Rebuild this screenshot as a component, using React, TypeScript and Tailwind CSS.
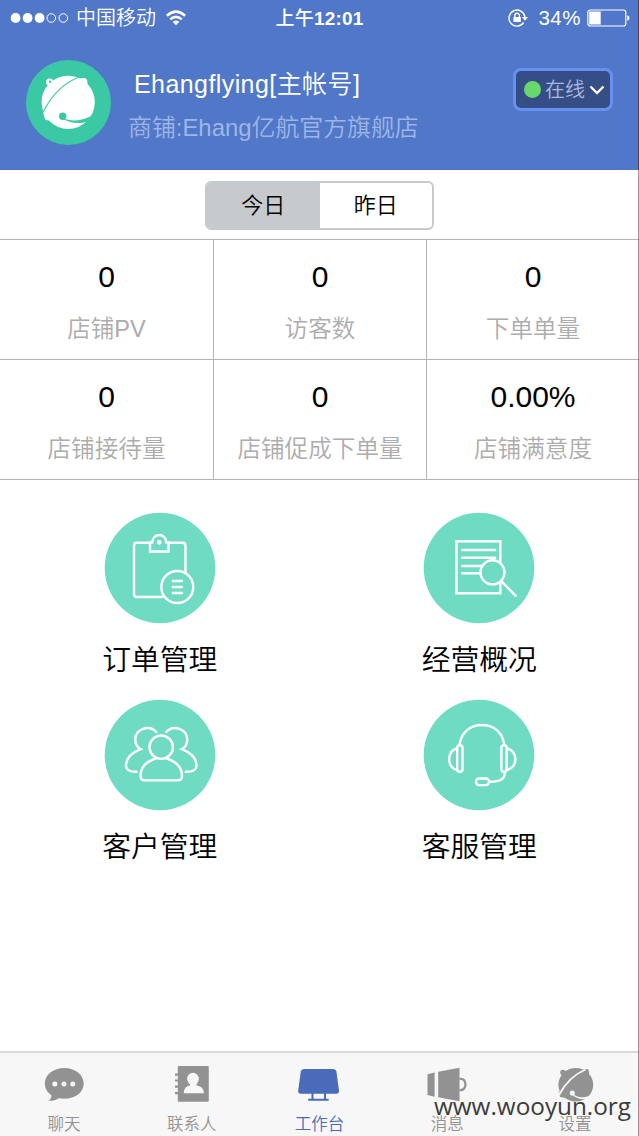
import type { ReactNode } from "react";

const stats = [
  { value: "0", label: "店铺PV" },
  { value: "0", label: "访客数" },
  { value: "0", label: "下单单量" },
  { value: "0", label: "店铺接待量" },
  { value: "0", label: "店铺促成下单量" },
  { value: "0.00%", label: "店铺满意度" },
];

const menu: { title: string; icon: ReactNode }[] = [
  { title: "订单管理", icon: <OrderIcon /> },
  { title: "经营概况", icon: <ReportIcon /> },
  { title: "客户管理", icon: <CustomersIcon /> },
  { title: "客服管理", icon: <HeadsetIcon /> },
];

const tabs: { name: string; icon: ReactNode; active?: boolean }[] = [
  { name: "聊天", icon: <ChatIcon /> },
  { name: "联系人", icon: <ContactsIcon /> },
  { name: "工作台", icon: <DeskIcon />, active: true },
  { name: "消息", icon: <MegaphoneIcon /> },
  { name: "设置", icon: <SettingsIcon /> },
];

function OrderIcon() {
  return (
    <>
      <path d="M45.5 30.8H33Q30 30.8 30 33.8V82Q30 85 33 85H58M65 30.8H78.5Q81.5 30.8 81.5 33.8V60" />
      <path d="M46 39.5V30.5H48.2C49 20.5 61.5 20.5 62.3 30.5H64.5V39.5Z" />
      <circle cx="55.2" cy="30.3" r="1.7" fill="white" strokeWidth="1.4" />
      <circle cx="73.3" cy="75" r="16" />
      <path d="M69 69H77.8M69 75H77.8M69 81H77.8" strokeWidth="2.6" />
    </>
  );
}

function ReportIcon() {
  return (
    <>
      <path d="M77.3 50V29.3H33.5V81.3H77.3V71" />
      <path d="M39.2 38H72.2M39.2 45.7H72.2M39.2 54H58.8M39.2 61.3H56.5" />
      <circle cx="69.5" cy="60.3" r="12" />
      <path d="M78.2 69L92.5 83.7" />
    </>
  );
}

function CustomersIcon() {
  return (
    <>
      <circle cx="57.2" cy="48.2" r="11.7" />
      <path d="M53 59.2C43 62 36.5 68 36.5 77Q36.5 81.4 41 81.4H73.5Q78 81.4 78 77C78 68 71 62 61.5 59.2" />
      <path d="M52.3 33C45 25 31.3 30 31.3 40.5C31.3 45 33.5 48.5 36.8 50.2C28 53.5 22 59 22 67Q22.3 73 32.7 72.8" />
      <path d="M62.3 33C69.5 25 83.2 30 83.2 40.5C83.2 45 81 48.5 77.7 50.2C86.5 53.5 92.5 59 92.5 67Q92.2 73 81.8 72.8" />
    </>
  );
}

function HeadsetIcon() {
  return (
    <>
      <path d="M36.5 46C38 33.5 47 26 59 26S79.8 33.5 81.3 46" />
      <rect x="34.2" y="46.2" width="5.3" height="26.6" rx="2.65" />
      <rect x="78.4" y="46.2" width="5.3" height="26.6" rx="2.65" />
      <path d="M34.2 49.5C23.5 51 23.5 69.5 34.2 70.8" />
      <path d="M83.8 49.5C95.2 51 95.2 69.5 83.8 70.8" />
      <path d="M81.8 73C81.8 80 78 82.8 66.5 82.8" />
      <rect x="53" y="79.5" width="13" height="6.6" rx="3" />
    </>
  );
}

function ChatIcon() {
  return (
    <>
      <path d="M24.3 6C13.3 6 4.8 13 4.8 21.5C4.8 26.5 7.5 30.6 11.5 33.2C11.3 35.8 10.5 37.2 8.8 38.8C12.5 38.9 15.8 38.3 18.8 36.3C33 38.5 43.7 31.5 43.7 21.5C43.7 13 35.3 6 24.3 6Z" />
      <g fill="#f7f7f7">
        <circle cx="14.8" cy="22" r="2.5" />
        <circle cx="24" cy="22" r="2.5" />
        <circle cx="32.8" cy="22" r="2.5" />
      </g>
    </>
  );
}

function ContactsIcon() {
  return (
    <>
      <rect x="9.8" y="4" width="31" height="35.7" rx="1" />
      <path d="M7 12.7H12M7 18.5H12M7 24.7H12M7 31.2H12" stroke="currentColor" strokeWidth="2.2" />
      <ellipse cx="25" cy="17" rx="5.8" ry="6.3" fill="#f7f7f7" />
      <path d="M22 21H28.5V23.5Q35.5 24 36 31.3H15.7Q16 24 22 23.5Z" fill="#f7f7f7" />
    </>
  );
}

function DeskIcon() {
  return (
    <>
      <path d="M9 7H38.2Q41 7 41.4 9.5L44 28.5Q44.3 31.7 41 31.7H6Q2.8 31.7 3.2 28.5L5.8 9.5Q6.2 7 9 7Z" />
      <path d="M17.5 31V38M30 31V38M13.2 37.8H33.7" fill="none" stroke="currentColor" strokeWidth="2" />
    </>
  );
}

function MegaphoneIcon() {
  return (
    <>
      <path d="M4.5 12.2L11.6 10.6V34.8L4.5 33Z" />
      <path d="M15.2 9.7L36.5 5.7V39.2L15.2 35.3Z" />
      <path d="M36.5 17C44.5 15 44.5 29.5 36.5 28" fill="none" stroke="currentColor" strokeWidth="2.3" />
    </>
  );
}

function SettingsIcon() {
  return (
    <>
      <ellipse cx="24.8" cy="22.8" rx="17.4" ry="16.7" />
      <circle cx="12" cy="10.5" r="2.8" />
      <path d="M32 7.5L37 7Q38.3 9 38 13Z" />
      <path d="M7.5 29L9 35L15 36Z" />
      <path d="M34.5 7.5C22 13 14 21.5 8 33" fill="none" stroke="#f7f7f7" strokeWidth="1.9" />
      <circle cx="21.3" cy="31" r="2.6" fill="#f7f7f7" />
      <path d="M21 31.5C26 35.5 32 36.5 39.5 33.5L36 37C30 37.8 25 36.5 20.5 32.5Z" fill="#f7f7f7" />
    </>
  );
}

function Avatar() {
  return (
    <svg viewBox="0 0 85 85" className="h-[85px] w-[85px] shrink-0">
      <circle cx="42.5" cy="42.5" r="42.5" fill="#3bc9a5" />
      <g fill="white">
        <circle cx="42.2" cy="42.3" r="26.6" />
        <circle cx="23.7" cy="22" r="3.6" />
        <path d="M53 18.5L58.5 18Q61.5 18.5 61.3 21.5L61.5 25.5Z" />
        <path d="M16.5 50L18.6 58Q19.2 60.5 21.5 60.3L25 60.5Z" />
      </g>
      <circle cx="24" cy="21.7" r="1.2" fill="#3bc9a5" />
      <path d="M52.5 17.3C37 23.5 25 36 17 52.5" fill="none" stroke="#3bc9a5" strokeWidth="1.1" />
      <circle cx="36.7" cy="56.2" r="3.7" fill="#3bc9a5" />
      <path d="M36.5 58C45 61.8 55 61.5 66 55.5L61 61.5C53 64.5 44 63 36.5 58.8Z" fill="#3bc9a5" />
    </svg>
  );
}

function StatusBar() {
  return (
    <div className="grid h-9 grid-cols-3 items-center text-[20px] leading-none text-white">
      <div className="flex items-center pl-[10px]">
        <svg viewBox="0 0 60 12" className="h-3 w-[60px]">
          <g fill="white">
            <circle cx="5.6" cy="6" r="4.9" />
            <circle cx="17.6" cy="6" r="4.9" />
            <circle cx="29.6" cy="6" r="4.9" />
          </g>
          <g fill="none" stroke="white">
            <circle cx="41.3" cy="6" r="4.3" />
            <circle cx="53.3" cy="6" r="4.3" />
          </g>
        </svg>
        <span className="ml-[6px] whitespace-nowrap font-[350]">中国移动</span>
        <svg viewBox="0 0 20 16" className="ml-[10px] h-4 w-5" fill="none" stroke="white" strokeWidth="2.6">
          <path d="M.9 5.8Q10-2.4 19.1 5.8" />
          <path d="M4.2 9.4Q10 4.2 15.8 9.4" />
          <path d="M6.6 11.8Q10 9 13.4 11.8L10 15.2Z" fill="white" stroke="none" />
        </svg>
      </div>
      <div className="text-center text-[19px] font-medium tracking-[0.2px]">
        上午<span className="font-bold">12:01</span>
      </div>
      <div className="flex items-center justify-end pr-[9px]">
        <svg viewBox="0 0 20 18" className="h-[18px] w-5" fill="none" stroke="white" strokeWidth="1.4">
          <path d="M15.7 13.5A8 8 0 1 1 17 8.5" />
          <path d="M14 8H20L17 11.8Z" fill="white" stroke="none" />
          <rect x="5.4" y="8" width="7.4" height="5" fill="white" stroke="none" />
          <path d="M6.8 8V6.5A2.3 2.3 0 0 1 11.4 6.5V8" />
        </svg>
        <span className="ml-[10px] text-[20.5px] tracking-[0.5px]">34%</span>
        <svg viewBox="0 0 43 18" className="ml-[6px] h-[18px] w-[43px]">
          <rect x=".8" y="1" width="38" height="16" rx="2.5" fill="none" stroke="white" strokeWidth="1.2" />
          <rect x="2.2" y="2.5" width="11.5" height="13" fill="white" />
          <path d="M40.3 6.3Q42.5 7 42.5 9T40.3 11.7Z" fill="white" />
        </svg>
      </div>
    </div>
  );
}

export default function App() {
  return (
    <div className="relative flex h-[1136px] w-[639px] flex-col overflow-hidden bg-white font-['Liberation_Sans','Noto_Sans_CJK_SC',sans-serif]">
      <header className="h-[170px] shrink-0 bg-[#5077c8]">
        <StatusBar />
        <div className="flex pl-[26px] pr-[26px] pt-6">
          <Avatar />
          <div className="ml-[17px] flex-1 whitespace-nowrap pt-[6px] font-[350]">
            <h1 className="pl-[6px] text-[25px] leading-9 tracking-[0.42px] text-white">Ehangflying[主帐号]</h1>
            <p className="mt-2 text-[23.9px] leading-9 text-[#9fb5e6]">商铺:Ehang亿航官方旗舰店</p>
          </div>
          <button className="mt-2 flex h-[43px] w-[100px] items-center rounded-lg border-[3px] border-[#6890f0] bg-[#354e85] pl-2 text-[20px] font-[350] text-[#a9bbe3]">
            <span className="h-[17px] w-[17px] shrink-0 rounded-full bg-[#66d86c]" />
            <span className="ml-1 whitespace-nowrap">在线</span>
            <svg viewBox="0 0 16 10" className="ml-1 h-[10px] w-4" fill="none" stroke="white" strokeWidth="2.3">
              <path d="M1.5 1.5L8 8L14.5 1.5" />
            </svg>
          </button>
        </div>
      </header>

      <div className="flex h-[69px] shrink-0 justify-center pt-[11px]">
        <div className="flex h-[49px] w-[229px] overflow-hidden rounded-md border-2 border-[#c7cacd] text-[22px] font-[350]">
          <button className="flex-1 bg-[#c7cacd]">今日</button>
          <button className="flex-1">昨日</button>
        </div>
      </div>

      <div className="grid shrink-0 grid-cols-[213px_212px_1fr] gap-px border-y border-[#b4b4b4] bg-[#b4b4b4]">
        {stats.map((stat) => (
          <div key={stat.label} className="flex h-[119px] flex-col items-center bg-white pt-[19px]">
            <div className="text-[30px] leading-9 text-black">{stat.value}</div>
            <div className="mt-4 text-[23.6px] font-[350] leading-9 text-[#acacac]">{stat.label}</div>
          </div>
        ))}
      </div>

      <main className="grid grid-cols-2 pt-8">
        {menu.map((item) => (
          <div key={item.title} className="flex h-[187px] flex-col items-center">
            <svg viewBox="0 0 112 112" className="h-28 w-28">
              <circle cx="56" cy="56" r="55.3" fill="#70dbc3" />
              <g fill="none" stroke="white" strokeWidth="2.4" strokeLinecap="round">
                {item.icon}
              </g>
            </svg>
            <div className="mt-[18px] text-[28.8px] font-[350] leading-9 text-black">{item.title}</div>
          </div>
        ))}
      </main>

      <nav className="mt-auto grid h-[85px] shrink-0 grid-cols-5 border-t-2 border-[#d8d8d8] bg-[#f7f7f7]">
        {tabs.map((tab) => (
          <div
            key={tab.name}
            className={`flex flex-col items-center pt-[9px] ${tab.active ? "text-[#496bba]" : "text-[#929292]"}`}
          >
            <svg viewBox="0 0 48 42" className="h-[42px] w-12" fill="currentColor">
              {tab.icon}
            </svg>
            <span className="mt-2 text-[16.5px] font-[350] leading-6">{tab.name}</span>
          </div>
        ))}
      </nav>

      <div className="absolute bottom-[13px] right-[8px] font-['Open_Sans',sans-serif] text-[24.3px] leading-[34px] text-[#3c3c3c]">
        www.wooyun.org
      </div>
      <div className="absolute inset-y-0 right-0 w-px bg-black/40" />
    </div>
  );
}
